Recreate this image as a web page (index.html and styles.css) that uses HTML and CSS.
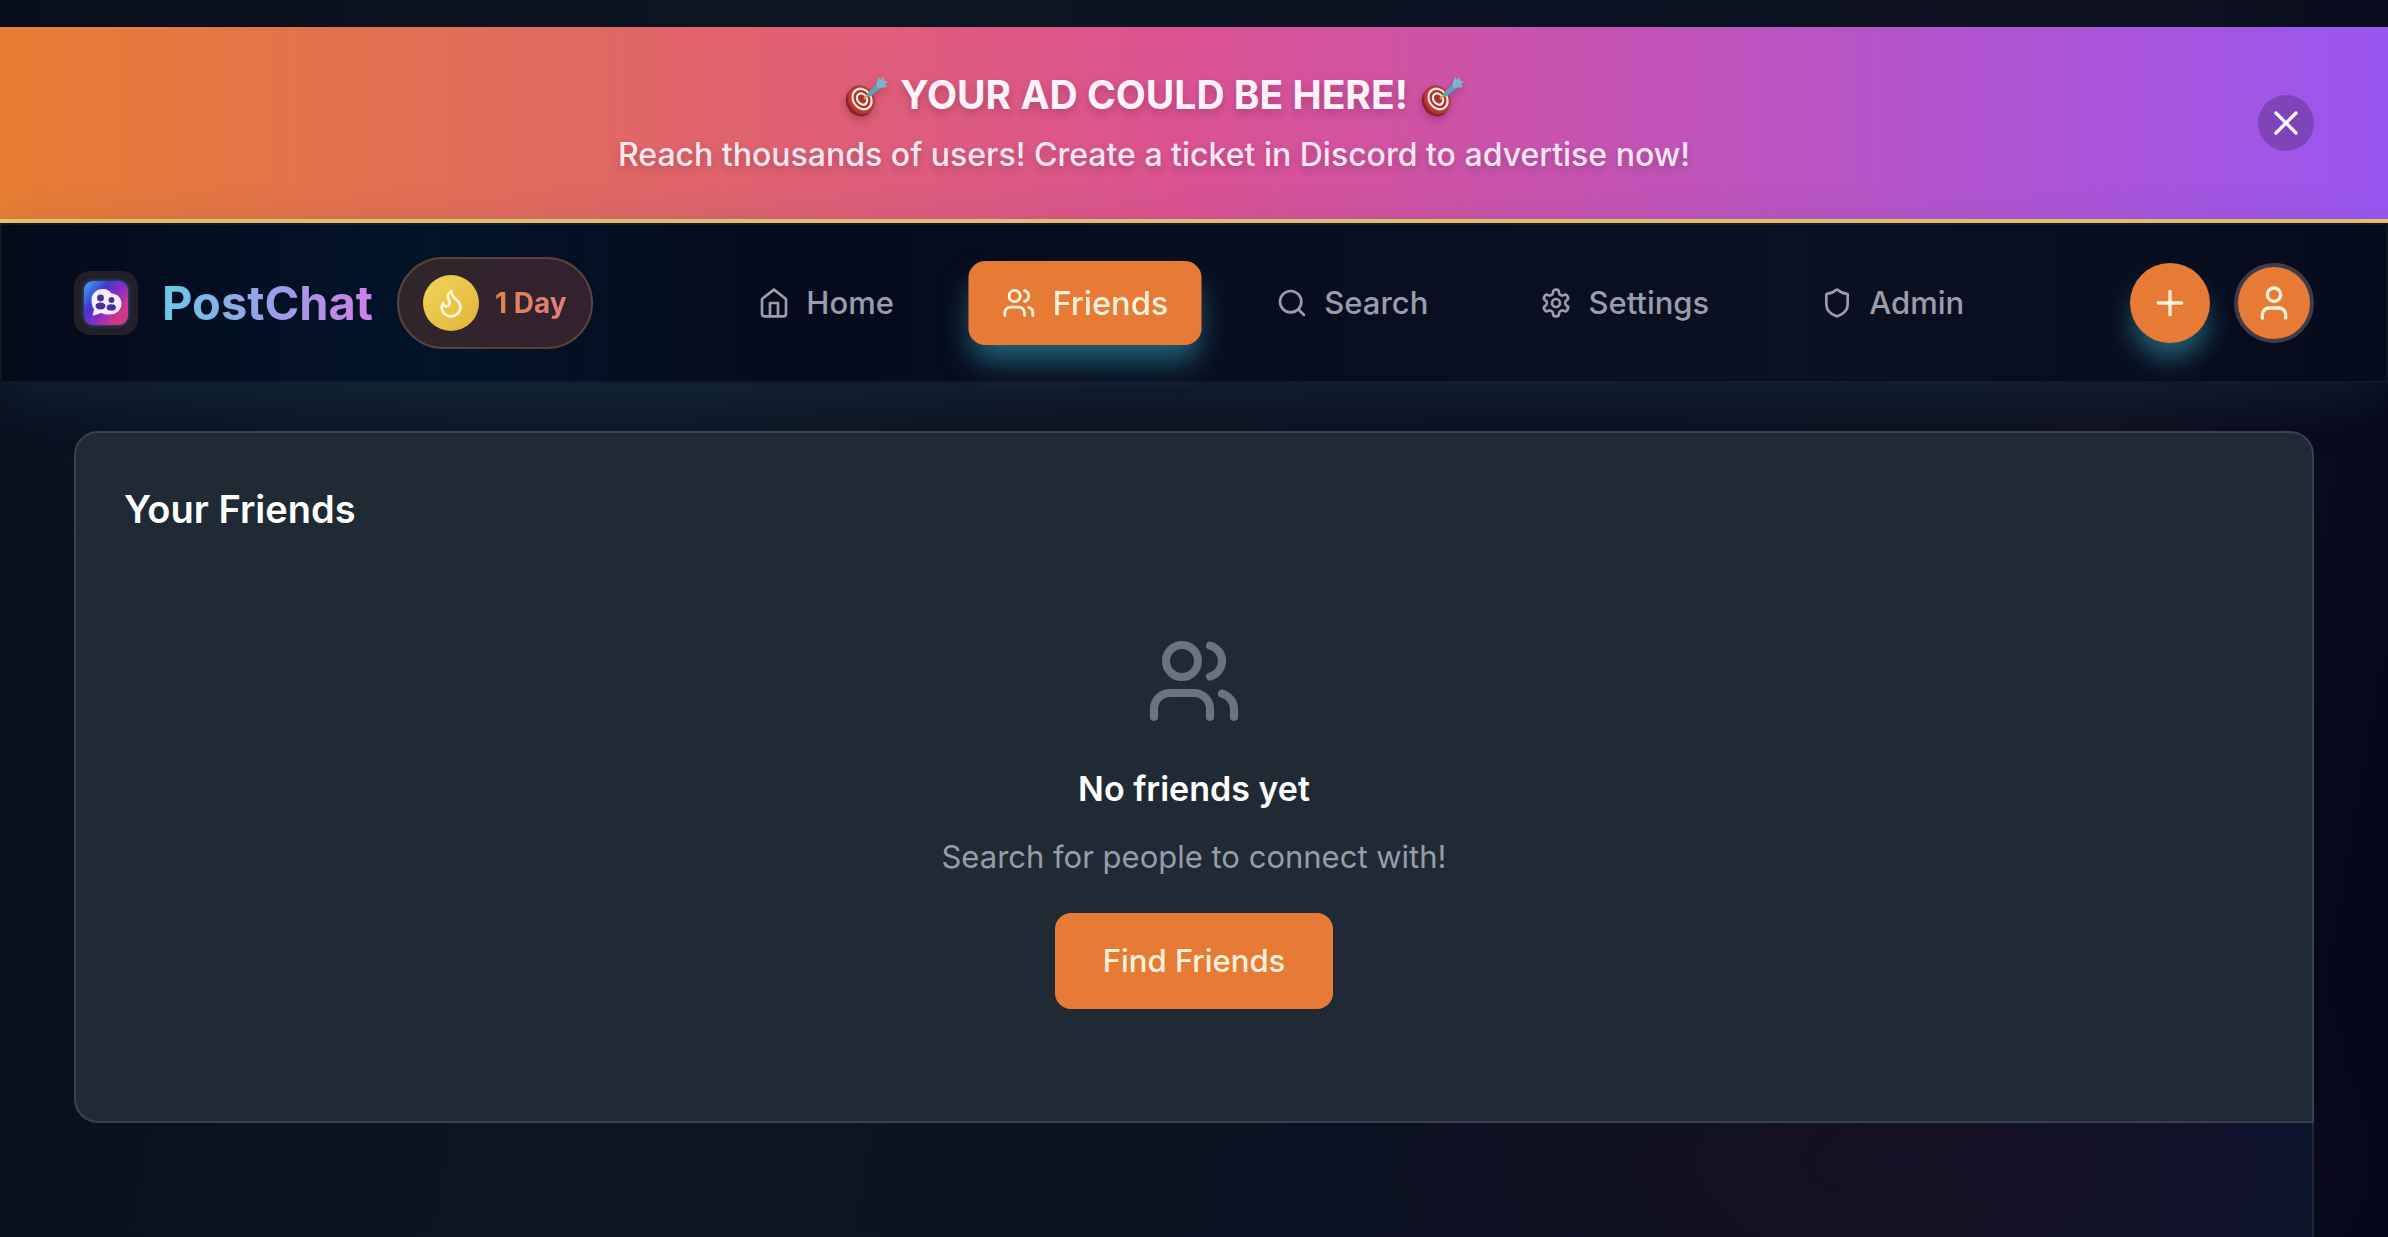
FILE: index.html
```html
<!DOCTYPE html>
<html lang="en">
<head>
    <meta charset="UTF-8">
    <meta name="viewport" content="width=device-width, initial-scale=1.0">
    <title>PostChat - Friends</title>
    <link rel="stylesheet" href="styles.css">
</head>

<body>

    <!-- Ad banner -->
    <aside class="banner">
        <div class="banner-text">
            <p class="banner-title">
                <svg class="dart" viewBox="0 0 44 44" aria-hidden="true"><use href="#dart"/></svg>
                <span>YOUR AD COULD BE HERE!</span>
                <svg class="dart" viewBox="0 0 44 44" aria-hidden="true"><use href="#dart"/></svg>
            </p>
            <p class="banner-sub">Reach thousands of users! Create a ticket in Discord to advertise now!</p>
        </div>
        <button class="banner-close" type="button" aria-label="Close">
            <svg class="icon" viewBox="0 0 24 24"><path d="M18 6 6 18M6 6l12 12"/></svg>
        </button>
    </aside>

    <!-- Top navigation -->
    <header class="navbar">
        <div class="brand">
            <a class="logo" href="#" aria-label="PostChat">
                <svg viewBox="0 0 44 44">
                    <defs>
                        <linearGradient id="logoFill" x1="0" y1="0.1" x2="1" y2="0.9">
                            <stop offset="0" stop-color="#3fa4e8"/>
                            <stop offset="0.3" stop-color="#4038cf"/>
                            <stop offset="0.55" stop-color="#8a2cc4"/>
                            <stop offset="0.8" stop-color="#cf3590"/>
                            <stop offset="1" stop-color="#d83a78"/>
                        </linearGradient>
                    </defs>
                    <rect width="44" height="44" rx="9" fill="url(#logoFill)"/>
                    <path fill="#f6efff" d="M19 8c4 0 6.500 1.500 8.500 4.500 6 .3 10 4.500 10 10 0 6.500-5 11-12 11-3.500 0-6-.5-8-1.500-2.500.5-4.500 1.500-7.500 2.500-1 .3-1.500-.3-1.200-1.200l1.400-5C8 25.500 7.500 22.500 7.500 19 7.500 12.500 12.500 8 19 8z"/>
                    <g fill="#4a2d9c">
                        <circle cx="16.500" cy="17" r="3.400"/>
                        <ellipse cx="16.500" cy="25" rx="5" ry="3.400"/>
                        <circle cx="27.500" cy="19" r="2.900"/>
                        <ellipse cx="27.300" cy="26.500" rx="4.600" ry="3.200"/>
                    </g>
                </svg>
            </a>
            <span class="brand-name">PostChat</span>
            <div class="streak">
                <span class="streak-icon">
                    <svg class="icon" viewBox="0 0 24 24"><path d="M8.500 14.500A2.500 2.500 0 0 0 11 12c0-1.380-.5-2-1-3-1.072-2.143-.224-4.054 2-6 .5 2.500 2 4.900 4 6.500 2 1.600 3 3.500 3 5.500a7 7 0 1 1-14 0c0-1.153.433-2.294 1-3a2.500 2.500 0 0 0 2.500 2.500z"/></svg>
                </span>
                <span class="streak-days">1 Day</span>
            </div>
        </div>

        <nav class="nav-links">
            <a class="nav-link" href="#">
                <svg class="icon" viewBox="0 0 24 24"><path d="m3 9 9-7 9 7v11a2 2 0 0 1-2 2H5a2 2 0 0 1-2-2z"/><path d="M9 22V12h6v10"/></svg>
                Home
            </a>
            <a class="nav-link active" href="#">
                <svg class="icon" viewBox="0 0 24 24"><use href="#users"/></svg>
                Friends
            </a>
            <a class="nav-link" href="#">
                <svg class="icon" viewBox="0 0 24 24"><circle cx="11" cy="11" r="8"/><path d="m21 21-4.300-4.300"/></svg>
                Search
            </a>
            <a class="nav-link" href="#">
                <svg class="icon" viewBox="0 0 24 24"><path d="M12.220 2h-.44a2 2 0 0 0-2 2v.18a2 2 0 0 1-1 1.730l-.43.25a2 2 0 0 1-2 0l-.15-.08a2 2 0 0 0-2.730.73l-.22.38a2 2 0 0 0 .73 2.730l.15.1a2 2 0 0 1 1 1.720v.51a2 2 0 0 1-1 1.740l-.15.09a2 2 0 0 0-.73 2.730l.22.38a2 2 0 0 0 2.730.73l.15-.08a2 2 0 0 1 2 0l.43.25a2 2 0 0 1 1 1.730V20a2 2 0 0 0 2 2h.44a2 2 0 0 0 2-2v-.18a2 2 0 0 1 1-1.730l.43-.25a2 2 0 0 1 2 0l.15.08a2 2 0 0 0 2.730-.73l.22-.39a2 2 0 0 0-.73-2.730l-.15-.08a2 2 0 0 1-1-1.740v-.5a2 2 0 0 1 1-1.740l.15-.09a2 2 0 0 0 .73-2.730l-.22-.38a2 2 0 0 0-2.730-.73l-.15.08a2 2 0 0 1-2 0l-.43-.25a2 2 0 0 1-1-1.730V4a2 2 0 0 0-2-2z"/><circle cx="12" cy="12" r="3"/></svg>
                Settings
            </a>
            <a class="nav-link" href="#">
                <svg class="icon" viewBox="0 0 24 24"><path d="M20 13c0 5-3.500 7.500-7.660 8.950a1 1 0 0 1-.67-.01C7.500 20.500 4 18 4 13V6a1 1 0 0 1 1-1c2 0 4.500-1.200 6.240-2.720a1.170 1.170 0 0 1 1.520 0C14.510 3.810 17 5 19 5a1 1 0 0 1 1 1z"/></svg>
                Admin
            </a>
        </nav>

        <div class="nav-actions">
            <button class="round-btn glow" type="button" aria-label="New post">
                <svg class="icon" viewBox="0 0 24 24"><path d="M5 12h14M12 5v14"/></svg>
            </button>
            <button class="round-btn avatar" type="button" aria-label="Profile">
                <svg class="icon" viewBox="0 0 24 24"><path d="M19 21v-2a4 4 0 0 0-4-4H9a4 4 0 0 0-4 4v2"/><circle cx="12" cy="7" r="4"/></svg>
            </button>
        </div>
    </header>

    <main class="content">
        <section class="card">
            <h1>Your Friends</h1>
            <div class="empty">
                <svg class="icon" viewBox="0 0 24 24" aria-hidden="true"><use href="#users"/></svg>
                <h2>No friends yet</h2>
                <p>Search for people to connect with!</p>
                <button class="find-btn" type="button">Find Friends</button>
            </div>
        </section>
        <div class="panel"></div>
    </main>

    <!-- Shared shapes -->
    <svg class="sprite" aria-hidden="true">
        <symbol id="users" viewBox="0 0 24 24">
            <path d="M16 21v-2a4 4 0 0 0-4-4H6a4 4 0 0 0-4 4v2"/>
            <circle cx="9" cy="7" r="4"/>
            <path d="M22 21v-2a4 4 0 0 0-3-3.870M16 3.130a4 4 0 0 1 0 7.750"/>
        </symbol>
        <symbol id="dart" viewBox="0 0 44 44">
            <g transform="rotate(-35 17 28)">
                <ellipse cx="15" cy="28" rx="13" ry="15" fill="#8c2328"/>
                <ellipse cx="18" cy="27" rx="13" ry="15" fill="#b93733"/>
                <ellipse cx="19" cy="27" rx="10" ry="12" fill="#f8e8de"/>
                <ellipse cx="19" cy="27" rx="7.800" ry="9.600" fill="#a83230"/>
                <ellipse cx="19" cy="27" rx="5.800" ry="7.200" fill="#f8e8de"/>
                <ellipse cx="19" cy="27" rx="3.600" ry="4.800" fill="#a83230"/>
            </g>
            <path d="m20 26 7-7" stroke="#c9a24a" stroke-width="2"/>
            <path d="m26 21 9-8" stroke="#58a3b8" stroke-width="5" stroke-linecap="round"/>
            <path d="m32 12 3-8 2.500 3L39 3l1.500 5 3.500.5-3 2.500 2 3-9 1z" fill="#74b9cc"/>
        </symbol>
    </svg>

</body>
</html>
```
FILE: styles.css
```css
* {
    margin: 0;
    padding: 0;
    box-sizing: border-box;
}

body {
    display: flex;
    flex-direction: column;
    min-height: 100vh;
    padding-top: 27px;
    font-family: Inter, "Liberation Sans", sans-serif;
    font-size: 31px;
    line-height: 48px;
    color: #fff;
    background:
        radial-gradient(ellipse 600px 300px at 18% 28%, rgba(14, 44, 70, 0.3), transparent),
        radial-gradient(ellipse 560px 260px at 80% 94%, rgba(24, 16, 38, 0.8), transparent),
        linear-gradient(100deg, #080e1c 0%, #0e1522 28%, #0b1122 60%, #0e1121 84%, #03041a 100%);
}

button {
    border: none;
    font: inherit;
    color: inherit;
    cursor: pointer;
}

a {
    color: inherit;
    text-decoration: none;
}

.icon {
    width: 32px;
    height: 32px;
    fill: none;
    stroke: currentColor;
    stroke-width: 2;
    stroke-linecap: round;
    stroke-linejoin: round;
    flex-shrink: 0;
}

.sprite {
    position: absolute;
    width: 0;
    height: 0;
}

/* Ad banner */
.banner {
    display: flex;
    align-items: center;
    gap: 24px;
    padding: 40px 74px;
    background: linear-gradient(90deg, #e87d33, #db5293 50%, #9a56f0);
    border-bottom: 4px solid #efc76c;
}

.banner-text {
    flex: 1;
    text-align: center;
    text-shadow: 0 4px 8px rgba(0, 0, 0, 0.2);
}

.banner-title {
    display: flex;
    align-items: center;
    justify-content: center;
    gap: 12px;
    margin-bottom: 8px;
    font-size: 39px;
    line-height: 56px;
    font-weight: 700;
    color: #fff2fb;
}

.dart {
    width: 44px;
    height: 44px;
    filter: drop-shadow(0 4px 4px rgba(0, 0, 0, 0.2));
}

.banner-sub {
    font-size: 32px;
    font-weight: 500;
    color: #fde6f1;
}

.banner-close {
    display: grid;
    place-items: center;
    width: 56px;
    height: 56px;
    border-radius: 50%;
    background: rgba(0, 0, 0, 0.2);
}

.banner-close .icon {
    width: 40px;
    height: 40px;
}

/* Navigation */
.navbar {
    display: flex;
    align-items: center;
    justify-content: space-between;
    padding: 32px 72px;
    border: 2px solid rgba(255, 255, 255, 0.05);
    background: linear-gradient(90deg, #040a1a, #021429 18%, #050b1d 32%, #0b1122 75%, #050b1c);
    box-shadow: 0 16px 48px rgba(34, 76, 94, 0.28);
}

.brand {
    display: flex;
    align-items: center;
    gap: 24px;
}

.logo {
    display: grid;
    place-items: center;
    width: 64px;
    height: 64px;
    border-radius: 16px;
    background: #221f26;
}

.logo svg {
    width: 44px;
    height: 44px;
    filter: drop-shadow(0 0 2px #2a5fb8);
}

.brand-name {
    font-size: 47px;
    font-weight: 700;
    line-height: 64px;
    color: transparent;
    background: linear-gradient(90deg, #6cc8e8, #97a0e6 50%, #d27ee6);
    background-clip: text;
}

.streak {
    display: flex;
    align-items: center;
    gap: 16px;
    height: 92px;
    padding: 0 24px;
    border: 2px solid #5a4238;
    border-radius: 46px;
    background: linear-gradient(90deg, #30262a, #34202e);
}

.streak-icon {
    display: grid;
    place-items: center;
    width: 56px;
    height: 56px;
    border-radius: 50%;
    color: #fff8da;
    background: linear-gradient(135deg, #f0d656, #e3b23c);
}

.streak-days {
    font-size: 28px;
    font-weight: 700;
    color: transparent;
    background: linear-gradient(90deg, #e0864e, #dd7f80);
    background-clip: text;
}

.nav-links {
    display: flex;
    align-items: center;
    gap: 48px;
}

.nav-link {
    display: flex;
    align-items: center;
    gap: 16px;
    height: 80px;
    padding: 0 32px;
    border-radius: 16px;
    font-weight: 500;
    color: #9a9daa;
}

.nav-link.active {
    color: #fff3dc;
    background: #e77b35;
    box-shadow: 0 18px 28px -4px rgba(56, 165, 190, 0.6);
    transform: scale(1.05);
}

.nav-actions {
    display: flex;
    gap: 24px;
}

.round-btn {
    display: grid;
    place-items: center;
    width: 80px;
    height: 80px;
    border-radius: 50%;
    color: #fff3dc;
    background: #e77b35;
}

.round-btn .icon {
    width: 40px;
    height: 40px;
}

.round-btn.glow {
    box-shadow: 0 18px 28px -4px rgba(56, 165, 190, 0.6);
}

.round-btn.avatar {
    border: 4px solid #3c3d48;
}

/* Friends card */
.content {
    display: flex;
    flex-direction: column;
    flex: 1;
    padding: 48px 74px 0;
}

.card {
    padding: 48px;
    border: 2px solid #38424c;
    border-radius: 24px 24px 0 24px;
    background: #202a34;
}

.card h1 {
    font-size: 38px;
    line-height: 56px;
    font-weight: 600;
}

.empty {
    display: flex;
    flex-direction: column;
    align-items: center;
    padding: 96px 0 64px;
}

.empty .icon {
    width: 96px;
    height: 96px;
    color: #6b7280;
}

.empty h2 {
    margin: 32px 0 16px;
    font-size: 34px;
    line-height: 56px;
    font-weight: 600;
}

.empty p {
    color: #979cab;
}

.find-btn {
    height: 96px;
    margin-top: 32px;
    padding: 0 48px;
    border-radius: 16px;
    font-weight: 500;
    color: #fff3dc;
    background: #e77b35;
}

.panel {
    flex: 1;
    border-right: 2px solid #1d2a38;
    background: linear-gradient(90deg, transparent 84%, rgba(20, 30, 60, 0.5));
}
```
